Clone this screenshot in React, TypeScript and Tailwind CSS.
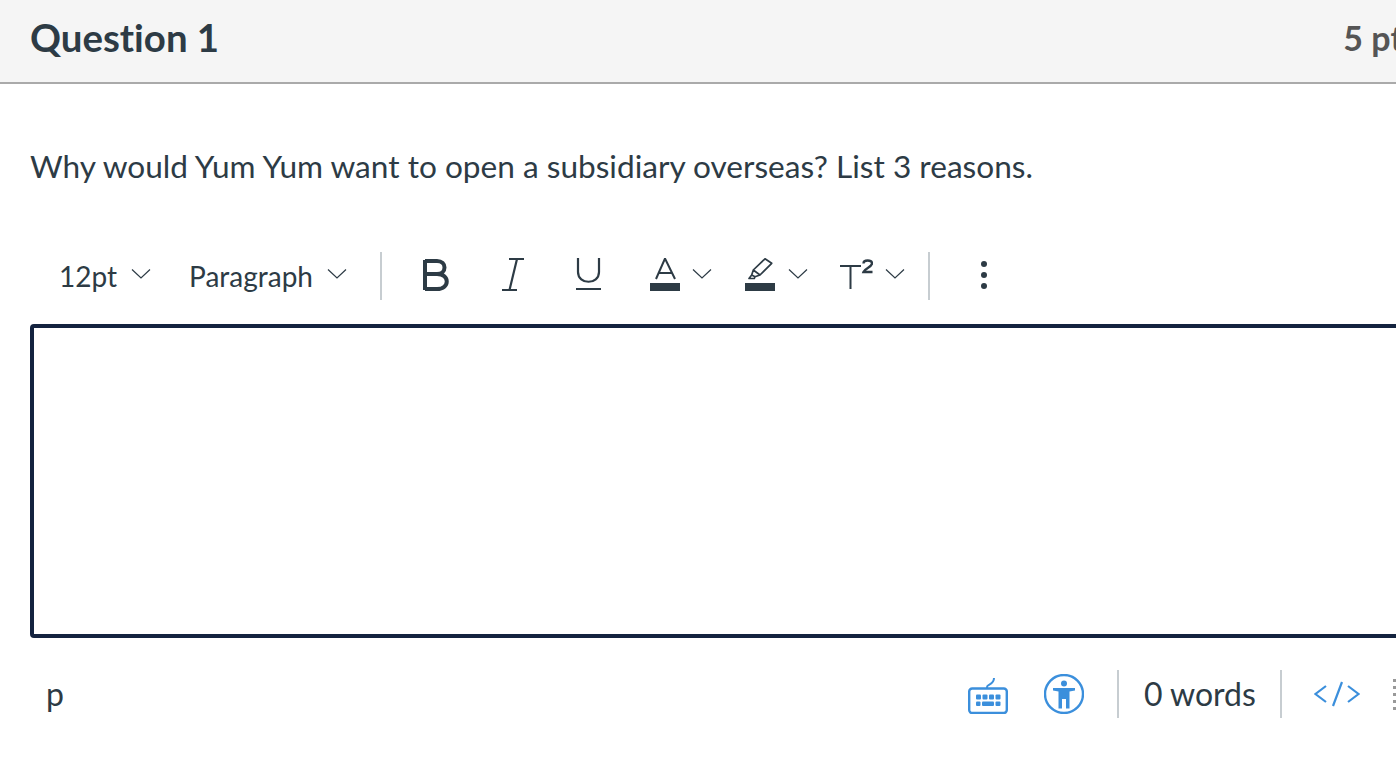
const ink = "#2d3b45";
const blue = "#3b8fdc";

function Chevron() {
  return (
    <span className="flex mb-[4px]">
      <svg width="20" height="12" viewBox="0 0 20 12" fill="none" stroke="#2d3b45" strokeWidth="1.2">
        <path d="M1 1.5 L10 10 L19 1.5" />
      </svg>
    </span>
  );
}

function Divider({ className }: { className: string }) {
  return <span className={`w-[2px] h-[48px] bg-[#c7cdd1] ${className}`}></span>;
}

function Toolbar() {
  return (
    <div className="flex items-center h-[48px] mt-[63px] ml-[59px] text-[#2d3b45] text-[28px]">
      <span>12pt</span>
      <span className="ml-[14px]"><Chevron /></span>
      <span className="ml-[38px]">Paragraph</span>
      <span className="ml-[14px]"><Chevron /></span>
      <Divider className="ml-[33px]" />
      <svg className="ml-[40px] mb-[2px]" width="28" height="34" viewBox="0 0 28 34" fill="none" stroke={ink} strokeWidth="4">
        <path d="M3 2 V32 M3 3 H15 C25 3 25 16 15 16 H3 M15 16 C28 16 28 31 15 31 H3" />
      </svg>
      <svg className="ml-[52px] mb-[2px]" width="22" height="34" viewBox="0 0 22 34" fill="none" stroke={ink} strokeWidth="2.2">
        <path d="M7 1 H22 M0 32 H15 M15 1 L7.5 32" />
      </svg>
      <svg className="ml-[52px] mb-[2px]" width="25" height="34" viewBox="0 0 25 34" fill="none" stroke={ink} strokeWidth="2.2">
        <path d="M2 0 V14 C2 27 23 27 23 14 V0 M0 31 H25" />
      </svg>
      <svg className="ml-[49px] mb-[2px]" width="30" height="34" viewBox="0 0 30 34" fill="none">
        <path d="M6 21 L15 0.5 L25 21 M9 15 H22" stroke={ink} strokeWidth="2" />
        <rect x="0" y="25" width="30" height="8" fill={ink} />
      </svg>
      <span className="ml-[12px]"><Chevron /></span>
      <svg className="ml-[33px] mb-[2px]" width="30" height="34" viewBox="0 0 30 34" fill="none">
        <path d="M20 0.8 L26.7 5.3 L15 17 L8.3 12 Z M8.3 12 L6.7 17 L10 18.7 L15 17 M6.7 17 L4 20.5 H9.3 L10 18.7" stroke={ink} strokeWidth="1.7" strokeLinejoin="round" />
        <rect x="0" y="25" width="30" height="8" fill={ink} />
      </svg>
      <span className="ml-[13px]"><Chevron /></span>
      <svg className="ml-[32px] mb-[2px]" width="33" height="34" viewBox="0 0 33 34" fill="none" stroke={ink}>
        <path d="M0 8 H21 M10.5 8 V31" strokeWidth="2" />
        <path d="M23.5 5.5 C23.5 1.5 32 1.5 32 5.5 C32 9 25 10 23.5 14 H32.5" strokeWidth="2.4" />
      </svg>
      <span className="ml-[12px]"><Chevron /></span>
      <Divider className="ml-[23px]" />
      <span className="ml-[51px] mb-[3px] flex flex-col gap-[5px]">
        <span className="w-[6px] h-[6px] rounded-full bg-[#2d3b45]"></span>
        <span className="w-[6px] h-[6px] rounded-full bg-[#2d3b45]"></span>
        <span className="w-[6px] h-[6px] rounded-full bg-[#2d3b45]"></span>
      </span>
    </div>
  );
}

function StatusBar() {
  return (
    <div className="flex items-center h-[48px] mt-[32px] text-[#2d3b45] text-[32px] w-[1420px]">
      <span className="ml-[46px]">p</span>
      <svg className="ml-[904px] mt-[4px]" width="40" height="36" viewBox="0 0 40 36" fill="none">
        <path d="M19 10 V9 C19 6 26 7 26 0" stroke={blue} strokeWidth="2" />
        <rect x="1.2" y="10.5" width="37.6" height="24.5" rx="3" stroke={blue} strokeWidth="2.4" />
        <g fill={blue}>
          <rect x="8" y="16.5" width="5" height="5" rx="1" />
          <rect x="14.5" y="16.5" width="5" height="5" rx="1" />
          <rect x="21" y="16.5" width="5" height="5" rx="1" />
          <rect x="27.5" y="16.5" width="5" height="5" rx="1" />
          <rect x="8" y="23.5" width="4.5" height="4.5" rx="1" />
          <rect x="14" y="23.5" width="12" height="4.5" rx="1" />
          <rect x="27.5" y="23.5" width="5" height="4.5" rx="1" />
        </g>
      </svg>
      <svg className="ml-[36px]" width="40" height="40" viewBox="0 0 40 40" fill="none">
        <circle cx="20" cy="20" r="19" stroke={blue} strokeWidth="2.4" />
        <circle cx="20" cy="9.5" r="3" fill={blue} />
        <path d="M9 14 H31 V16.5 L25.5 17.5 V34.5 H22 V25 H18 V34.5 H14.5 V17.5 L9 16.5 Z" fill={blue} />
      </svg>
      <Divider className="ml-[33px]" />
      <span className="ml-[25px]">0 words</span>
      <Divider className="ml-[24px]" />
      <svg className="ml-[32px]" width="46" height="26" viewBox="0 0 46 26" fill="none" stroke={blue} strokeWidth="2.2">
        <path d="M12 5 L1.5 13 L12 21 M28 1 L19 25 M34 5 L44.5 13 L34 21" />
      </svg>
      <span className="ml-[33px] flex flex-col gap-[4px]">
        <span className="w-[4px] h-[3px] bg-[#999]"></span>
        <span className="w-[4px] h-[3px] bg-[#999]"></span>
        <span className="w-[4px] h-[3px] bg-[#999]"></span>
        <span className="w-[4px] h-[3px] bg-[#999]"></span>
        <span className="w-[4px] h-[3px] bg-[#999]"></span>
      </span>
    </div>
  );
}

export default function App() {
  return (
    <div className="w-[1396px] h-[764px] overflow-hidden bg-white font-['Lato',sans-serif] [font-variant-ligatures:none]">
      <div className="w-[1430px]">
        <div className="flex items-center justify-between h-[84px] bg-[#f5f5f5] border-b-2 border-[#aaaaaa] pl-[30px] pr-[12px] pb-[7px]">
          <h1 className="text-[38.4px] font-bold text-[#2d3b45]">Question 1</h1>
          <span className="text-[34px] font-bold text-[#555555]">5 pts</span>
        </div>
        <p className="mt-[59px] ml-[30px] text-[31.6px] leading-[46px] text-[#2d3b45]">
          Why would Yum Yum want to open a subsidiary overseas? List 3 reasons.
        </p>
        <Toolbar />
        <div className="mt-[24px] ml-[30px] h-[314px] border-[4px] border-[#14233f] rounded-[4px]"></div>
        <StatusBar />
      </div>
    </div>
  );
}
